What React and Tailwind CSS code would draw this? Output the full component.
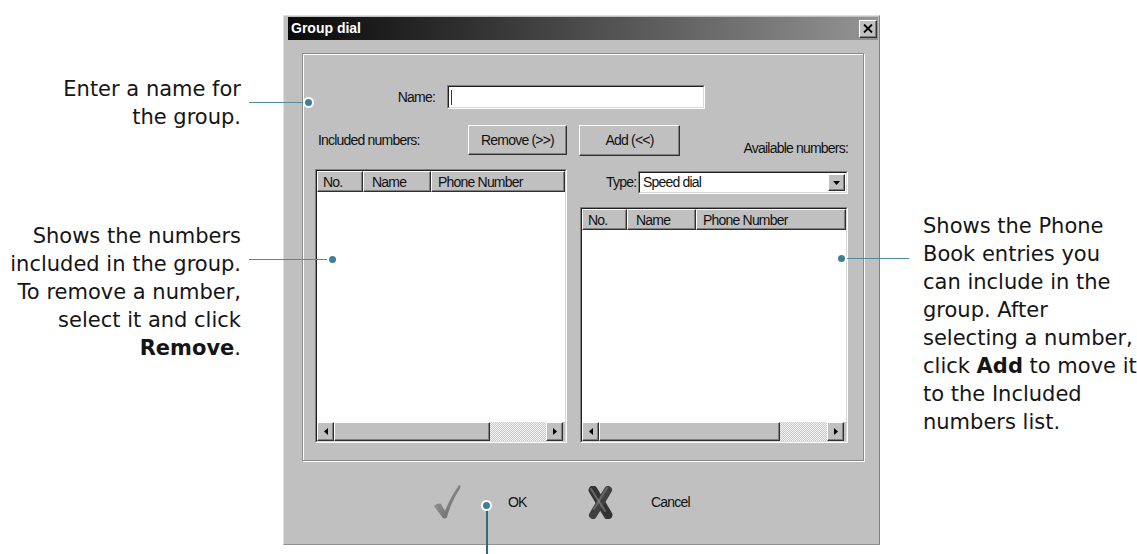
import React from "react";

const NARROW = "font-['Liberation_Sans',sans-serif] tracking-[-0.8px]";

function Raised({ className = "", children }) {
  return (
    <div className={"border border-t-white border-l-white border-r-[#303030] border-b-[#303030] shadow-[inset_-1px_-1px_0_#808080] bg-[#c0c0c0] " + className}>
      {children}
    </div>
  );
}

function Sunken({ className = "", inner = "", children }) {
  return (
    <div className={"border border-t-[#808080] border-l-[#808080] border-r-white border-b-white " + className}>
      <div className={"w-full h-full border border-t-[#202020] border-l-[#202020] border-r-[#d8d8d8] border-b-[#d8d8d8] bg-white " + inner}>
        {children}
      </div>
    </div>
  );
}

function ArrowLeft() {
  return (
    <svg width="4" height="7" viewBox="0 0 4 7"><path d="M4 0 L0 3.5 L4 7 Z" fill="#000" /></svg>
  );
}
function ArrowRight() {
  return (
    <svg width="4" height="7" viewBox="0 0 4 7"><path d="M0 0 L4 3.5 L0 7 Z" fill="#000" /></svg>
  );
}

function ListTable({ w, h, c1, c2, thumb }) {
  return (
    <Sunken className={w + " " + h} inner="flex flex-col">
      <div className={"flex h-[21px] text-[14px] leading-none text-[#111] " + NARROW}>
        <Raised className={c1 + " h-full flex items-center pl-[5px]"}>No.</Raised>
        <Raised className={c2 + " h-full flex items-center pl-[8px]"}>Name</Raised>
        <Raised className="flex-1 h-full flex items-center pl-[6px]">Phone Number</Raised>
      </div>
      <div className="flex-1 bg-white" />
      <div className="flex h-[19px] bg-white">
        <Raised className="w-[17px] h-full flex items-center justify-center"><ArrowLeft /></Raised>
        <Raised className={thumb + " h-full"} />
        <div className="flex-1 h-full bg-[repeating-conic-gradient(#c8c8c8_0_25%,#f4f4f4_0_50%)] bg-[length:2px_2px]" />
        <Raised className="w-[17px] h-full flex items-center justify-center"><ArrowRight /></Raised>
        <div className="w-[2px] h-full bg-[#c0c0c0]" />
      </div>
    </Sunken>
  );
}

function CheckIcon() {
  return (
    <svg width="28" height="36" viewBox="0 0 28 36">
      <defs>
        <linearGradient id="ck" x1="0" y1="0" x2="1" y2="1">
          <stop offset="0" stopColor="#a0a0a0" />
          <stop offset="1" stopColor="#646464" />
        </linearGradient>
      </defs>
      <path d="M1 22 C3 20 6 19 8 20 L12 27 C16 17 21 8 26 1 C27.5 1.5 28 3 27 4.5 C22 12 17 22 14 33 C13 35 10.5 35 9.5 33.5 Z" fill="url(#ck)" />
    </svg>
  );
}

function XIcon() {
  return (
    <svg width="30" height="33" viewBox="0 0 30 33">
      <path d="M8 4 L23 29" stroke="#333" strokeWidth="9" strokeLinecap="round" />
      <path d="M23 4 L8 29" stroke="#404040" strokeWidth="8" strokeLinecap="round" />
      <path d="M6 3 L20 25" stroke="#8a8a8a" strokeWidth="2" strokeLinecap="round" opacity="0.6" />
      <path d="M22 2 L9 23" stroke="#909090" strokeWidth="2" strokeLinecap="round" opacity="0.5" />
    </svg>
  );
}

function Dot({ className }) {
  return (
    <div className={"absolute w-[11px] h-[11px] rounded-full bg-[#3d7f98] border-2 border-white " + className} />
  );
}

export default function App() {
  const callout = "font-['DejaVu_Sans','Verdana',sans-serif] text-[21px] leading-[28px] text-[#151515] whitespace-nowrap";
  return (
    <div className="relative w-[1137px] h-[554px] bg-white overflow-hidden flex">
      {/* left callouts */}
      <div className={"w-[283px] shrink-0 flex flex-col items-end pr-[42px] text-right " + callout}>
        <div className="mt-[75px]">Enter a name for<br />the group.</div>
        <div className="mt-[91px]">
          Shows the numbers<br />included in the group.<br />To remove a number,<br />select it and click<br /><b>Remove</b>.
        </div>
      </div>

      {/* dialog */}
      <div className="w-[597px] h-[530px] mt-[15px] shrink-0 bg-[#c0c0c0] border border-t-[#e0e0e0] border-l-[#e0e0e0] border-r-[#808080] border-b-[#909090] pl-[4px] pr-[1px] pt-[1px] flex flex-col">
        <div className="h-[23px] bg-gradient-to-r from-[#0a0a0a] via-[#4c4c4c] to-[#959595] flex items-center justify-between pl-[3px] pr-[1px]">
          <span className="font-['Liberation_Sans',sans-serif] font-bold text-[14px] text-white">Group dial</span>
          <Raised className="w-[18px] h-[18px] flex items-center justify-center">
            <svg width="10" height="9" viewBox="0 0 10 9">
              <path d="M1 0.5 L9 8.5 M9 0.5 L1 8.5" stroke="#000" strokeWidth="1.8" />
            </svg>
          </Raised>
        </div>

        {/* group box */}
        <div className={"ml-[14px] mt-[13px] w-[562px] h-[408px] border border-[#8a8a8a] shadow-[inset_1px_1px_0_#fff,1px_1px_0_#fff] pl-[12px] pt-[31px] text-[14px] text-[#111] " + NARROW}>
          <div className="flex items-center h-[24px]">
            <div className="w-[120px] text-right">Name:</div>
            <Sunken className="ml-[12px] w-[258px] h-[24px]" inner="flex items-center pl-[2px]">
              <div className="w-[1px] h-[15px] bg-[#333]" />
            </Sunken>
          </div>
          <div className="flex gap-[12px] mt-[16px]">
            <div className="w-[252px] flex flex-col">
              <div className="h-[30px] flex items-center justify-between pl-[3px]">
                <span>Included numbers:</span>
                <Raised className="w-[99px] h-[30px] flex items-center justify-center">Remove (&gt;&gt;)</Raised>
              </div>
              <div className="mt-[14px]">
                <ListTable w="w-[252px]" h="h-[274px]" c1="w-[46px]" c2="w-[68px]" thumb="w-[156px]" />
              </div>
            </div>
            <div className="w-[269px] flex flex-col">
              <div className="h-[31px] flex">
                <Raised className="w-[101px] h-[31px] flex items-center justify-center">Add (&lt;&lt;)</Raised>
                <span className="ml-auto self-end leading-[14px] mb-[1px]">Available numbers:</span>
              </div>
              <div className="mt-[15px] h-[23px] flex items-center">
                <span className="ml-[27px]">Type:</span>
                <Sunken className="ml-auto w-[210px] h-[23px]" inner="flex items-center pl-[3px]">
                  <span className="flex-1">Speed dial</span>
                  <Raised className="w-[17px] h-[17px] mr-[1px] flex items-center justify-center">
                    <svg width="7" height="4" viewBox="0 0 7 4"><path d="M0 0 L7 0 L3.5 4 Z" fill="#000" /></svg>
                  </Raised>
                </Sunken>
              </div>
              <div className="mt-[13px] ml-[1px]">
                <ListTable w="w-[268px]" h="h-[236px]" c1="w-[45px]" c2="w-[69px]" thumb="w-[181px]" />
              </div>
            </div>
          </div>
        </div>

        {/* bottom buttons */}
        <div className={"flex items-center h-[82px] pl-[145px] text-[14px] text-[#111] " + NARROW}>
          <CheckIcon />
          <span className="ml-[47px] w-[77px]">OK</span>
          <XIcon />
          <span className="ml-[36px]">Cancel</span>
        </div>
      </div>

      {/* right callout */}
      <div className={"flex-1 pl-[43px] " + callout}>
        <div className="mt-[212px]">
          Shows the Phone<br />Book entries you<br />can include in the<br />group. After<br />selecting a number,<br />click <b>Add</b> to move it<br />to the Included<br />numbers list.
        </div>
      </div>

      {/* connectors */}
      <div className="absolute left-[249px] top-[102px] w-[58px] h-[1px] bg-[#4f8b9c]" />
      <Dot className="left-[303px] top-[97px]" />
      <div className="absolute left-[249px] top-[259px] w-[82px] h-[1px] bg-[#4f8b9c]" />
      <Dot className="left-[327px] top-[254px]" />
      <div className="absolute left-[843px] top-[258px] w-[66px] h-[1px] bg-[#4f8b9c]" />
      <Dot className="left-[836px] top-[253px]" />
      <div className="absolute left-[486px] top-[506px] w-[2px] h-[48px] bg-[#2f6a7c]" />
      <Dot className="left-[481px] top-[500px]" />
    </div>
  );
}
